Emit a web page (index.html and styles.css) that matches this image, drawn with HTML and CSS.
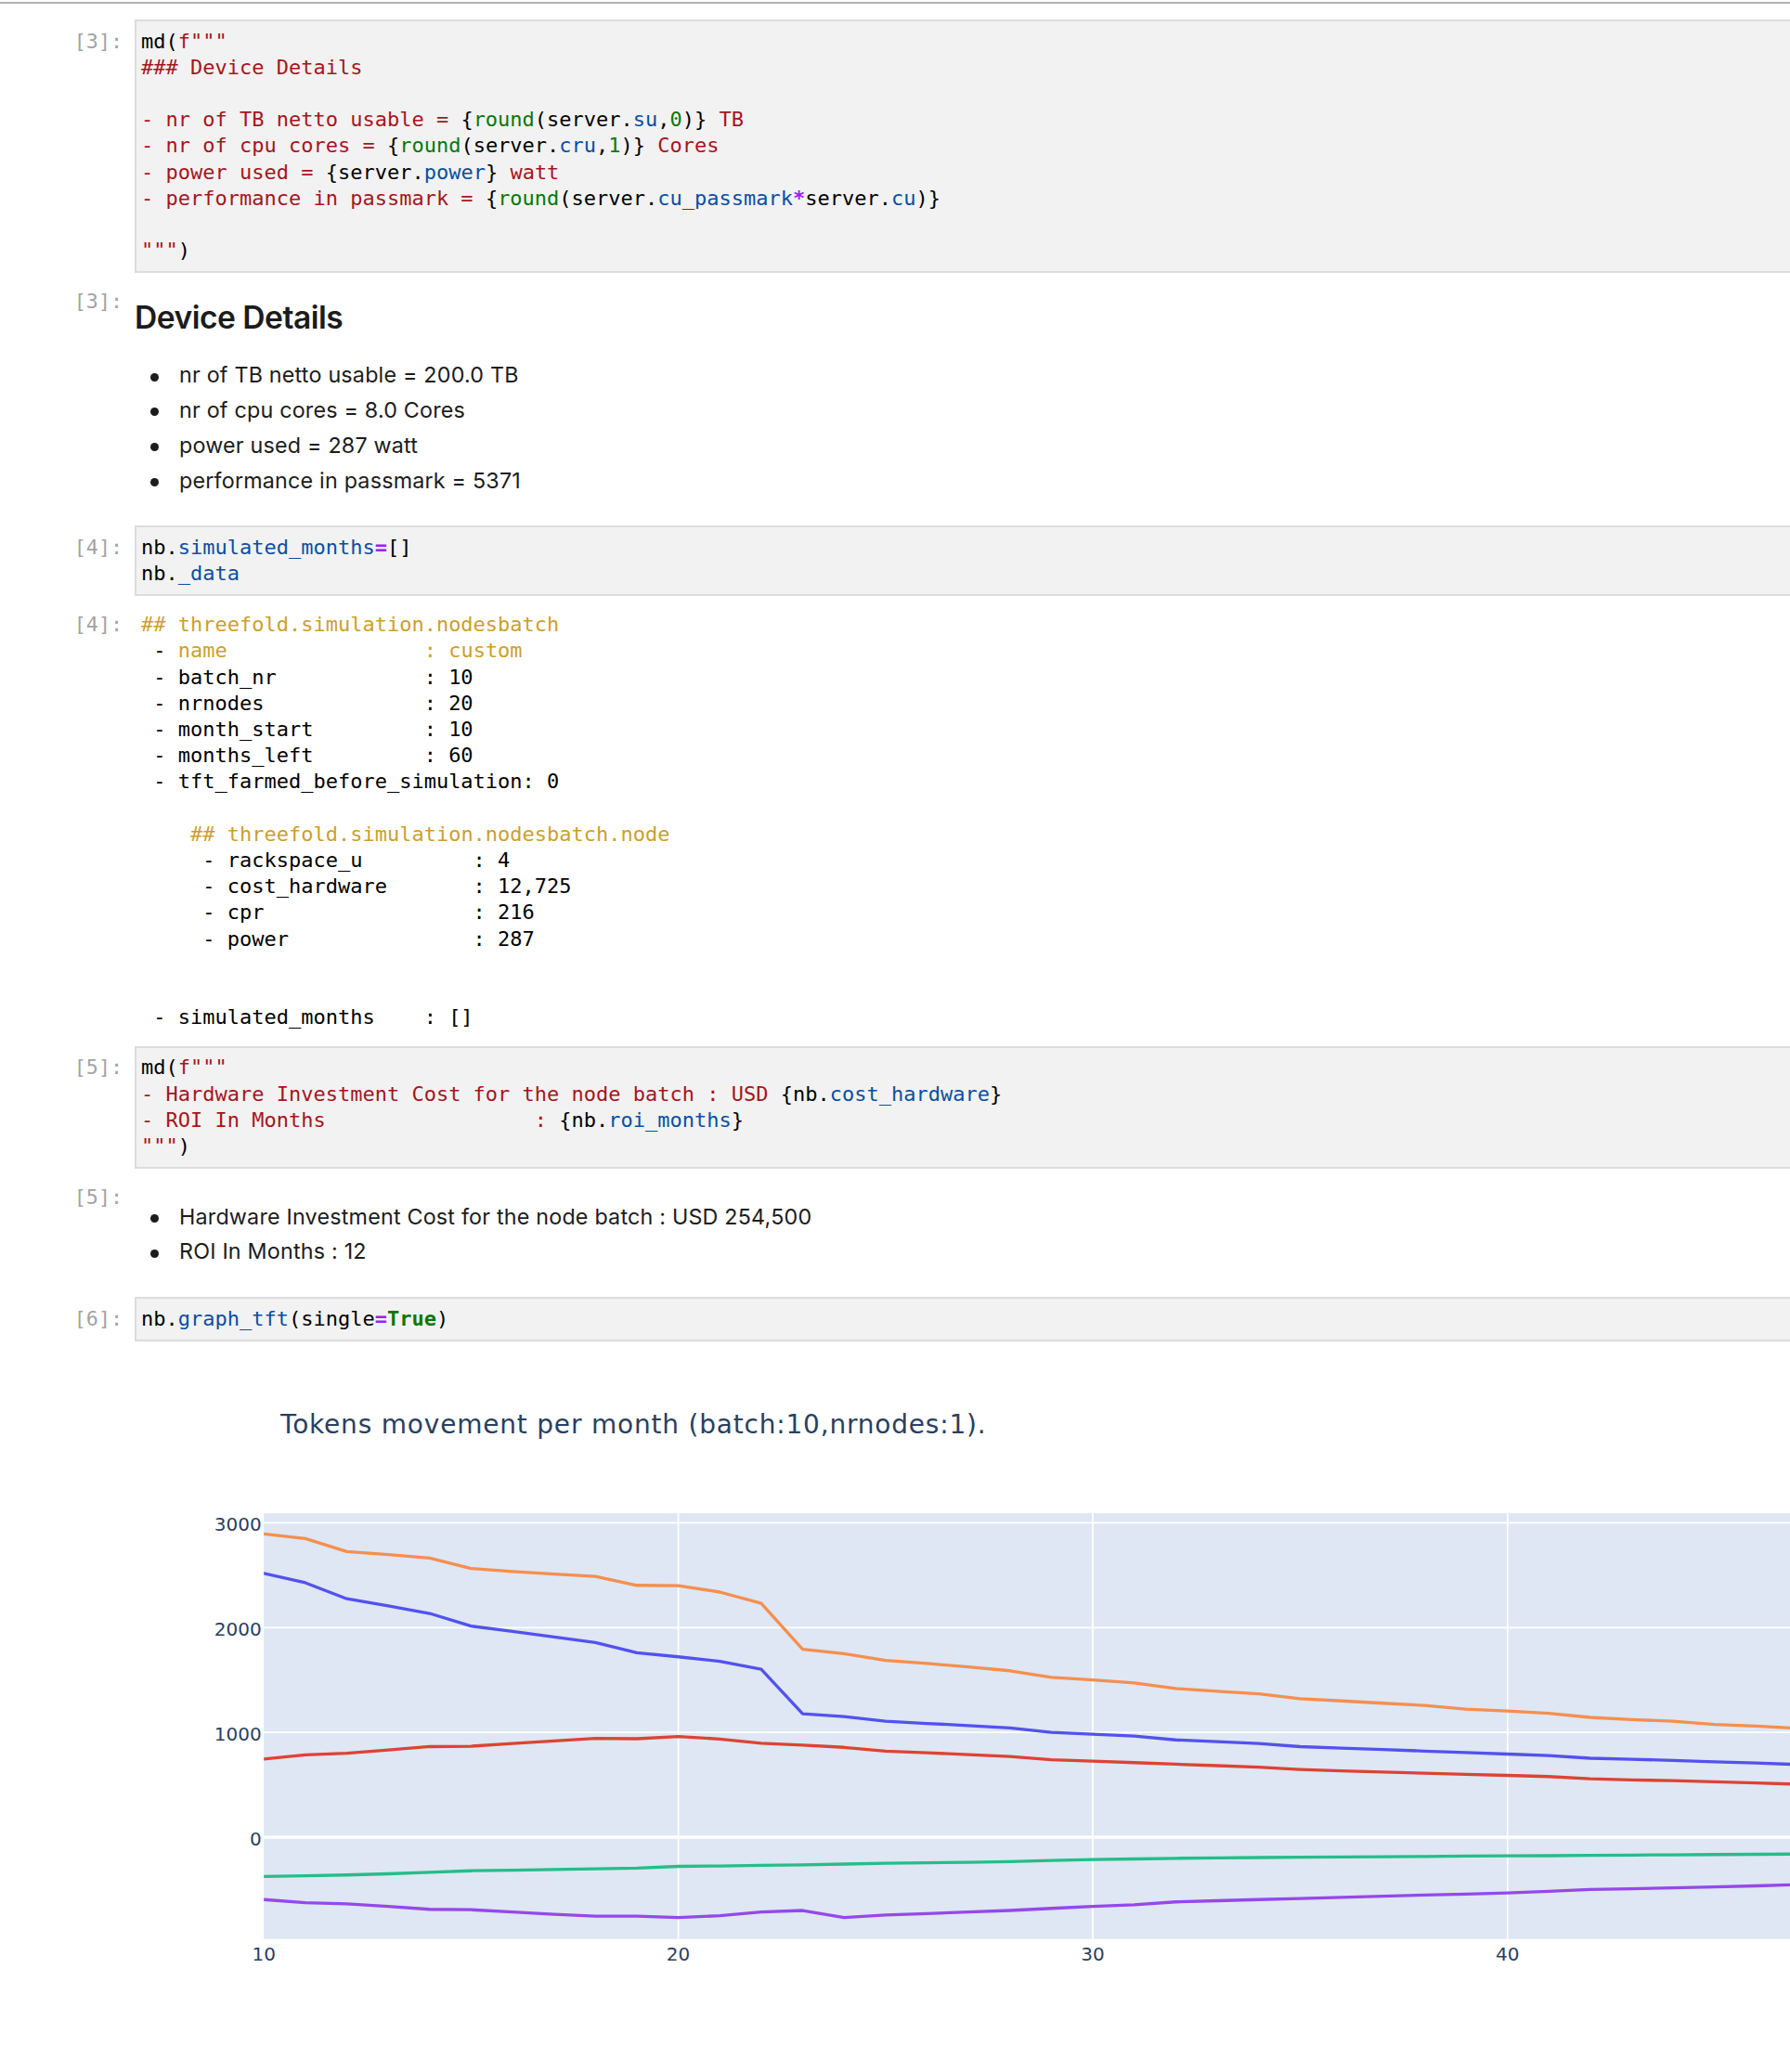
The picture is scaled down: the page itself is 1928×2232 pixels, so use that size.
FILE: index.html
```html
<!DOCTYPE html>
<html lang="en">
<head>
<meta charset="utf-8">
<title>Notebook</title>
<link rel="stylesheet" href="styles.css">
</head>
<body>
<div class="topbar"></div>
<main class="notebook">

  <section class="cell">
    <div class="row">
      <div class="prompt in">[3]:</div>
      <div class="editor"><pre class="code">md(<span class="s">f"""</span>
<span class="s">### Device Details</span>

<span class="s">- nr of TB netto usable = </span>{<span class="b">round</span>(server.<span class="p">su</span>,<span class="n">0</span>)}<span class="s"> TB</span>
<span class="s">- nr of cpu cores = </span>{<span class="b">round</span>(server.<span class="p">cru</span>,<span class="n">1</span>)}<span class="s"> Cores</span>
<span class="s">- power used = </span>{server.<span class="p">power</span>}<span class="s"> watt</span>
<span class="s">- performance in passmark = </span>{<span class="b">round</span>(server.<span class="p">cu_passmark</span><span class="o">*</span>server.<span class="p">cu</span>)}

<span class="s">"""</span>)</pre></div>
    </div>
    <div class="row out">
      <div class="prompt">[3]:</div>
      <div class="md">
        <h3>Device Details</h3>
        <ul>
          <li>nr of TB netto usable = 200.0 TB</li>
          <li>nr of cpu cores = 8.0 Cores</li>
          <li>power used = 287 watt</li>
          <li>performance in passmark = 5371</li>
        </ul>
      </div>
    </div>
  </section>

  <section class="cell">
    <div class="row">
      <div class="prompt in">[4]:</div>
      <div class="editor"><pre class="code">nb.<span class="p">simulated_months</span><span class="o">=</span>[]
nb.<span class="p">_data</span></pre></div>
    </div>
    <div class="row out">
      <div class="prompt">[4]:</div>
      <pre class="text"><span class="g">## threefold.simulation.nodesbatch</span>
 - <span class="g">name                : custom</span>
 - batch_nr            : 10
 - nrnodes             : 20
 - month_start         : 10
 - months_left         : 60
 - tft_farmed_before_simulation: 0

    <span class="g">## threefold.simulation.nodesbatch.node</span>
     - rackspace_u         : 4
     - cost_hardware       : 12,725
     - cpr                 : 216
     - power               : 287


 - simulated_months    : []</pre>
    </div>
  </section>

  <section class="cell">
    <div class="row">
      <div class="prompt in">[5]:</div>
      <div class="editor"><pre class="code">md(<span class="s">f"""</span>
<span class="s">- Hardware Investment Cost for the node batch : USD </span>{nb.<span class="p">cost_hardware</span>}
<span class="s">- ROI In Months                 : </span>{nb.<span class="p">roi_months</span>}
<span class="s">"""</span>)</pre></div>
    </div>
    <div class="row out">
      <div class="prompt">[5]:</div>
      <div class="md">
        <ul>
          <li>Hardware Investment Cost for the node batch : USD 254,500</li>
          <li>ROI In Months : 12</li>
        </ul>
      </div>
    </div>
  </section>

  <section class="cell">
    <div class="row">
      <div class="prompt in">[6]:</div>
      <div class="editor"><pre class="code">nb.<span class="p">graph_tft</span>(single<span class="o">=</span><span class="k">True</span>)</pre></div>
    </div>
    <div class="row out">
      <div class="prompt"></div>
      <div class="chart">
        <svg class="plot" width="1783" height="770" viewBox="0 0 1783 770" xmlns="http://www.w3.org/2000/svg">
          <defs>
            <clipPath id="plotclip"><rect x="139.2" y="168" width="1700" height="458.7"/></clipPath>
          </defs>
          <text class="title" x="157" y="82.3">Tokens movement per month (batch:10,nrnodes:1).</text>
          <rect class="bg" x="139.2" y="168" width="1700" height="458.7"/>
          <g class="grid">
            <line x1="585.6" y1="168" x2="585.6" y2="626.7"/>
            <line x1="1032" y1="168" x2="1032" y2="626.7"/>
            <line x1="1478.8" y1="168" x2="1478.8" y2="626.7"/>
            <line x1="139.2" y1="178.4" x2="1783" y2="178.4"/>
            <line x1="139.2" y1="291.3" x2="1783" y2="291.3"/>
            <line x1="139.2" y1="404.1" x2="1783" y2="404.1"/>
          </g>
          <line class="zero" x1="139.2" y1="517" x2="1783" y2="517"/>
          <g clip-path="url(#plotclip)">
            <g transform="translate(139.2 517) scale(44.64 -0.11287)" class="series">
              <path class="c-blue" vector-effect="non-scaling-stroke" d="M0 2518 L1 2428 L2 2275 L3 2207 L4 2135 L5 2014 L6 1964 L7 1910 L8 1857 L9 1760 L10 1721 L11 1678 L12 1603 L13 1178 L14 1150 L15 1107 L16 1085 L17 1065 L18 1043 L19 1000 L20 982 L21 964 L22 928 L23 911 L24 893 L25 864 L26 850 L27 836 L28 821 L29 807 L30 793 L31 778 L32 753 L33 743 L34 732 L35 718 L36 707 L37 693"/>
              <path class="c-red" vector-effect="non-scaling-stroke" d="M0 746 L1 786 L2 800 L3 832 L4 864 L5 868 L6 893 L7 918 L8 943 L9 939 L10 961 L11 936 L12 896 L13 878 L14 857 L15 821 L16 805 L17 788 L18 770 L19 739 L20 725 L21 711 L22 696 L23 682 L24 668 L25 646 L26 632 L27 621 L28 611 L29 600 L30 589 L31 578 L32 557 L33 546 L34 539 L35 528 L36 518 L37 505"/>
              <path class="c-green" vector-effect="non-scaling-stroke" d="M0 -375 L1 -368 L2 -361 L3 -350 L4 -336 L5 -321 L6 -315 L7 -309 L8 -302 L9 -296 L10 -279 L11 -275 L12 -270 L13 -264 L14 -257 L15 -250 L16 -245 L17 -240 L18 -234 L19 -222 L20 -214 L21 -208 L22 -202 L23 -198 L24 -195 L25 -192 L26 -190 L27 -187 L28 -185 L29 -181 L30 -179 L31 -177 L32 -174 L33 -171 L34 -169 L35 -166 L36 -164 L37 -161"/>
              <path class="c-purple" vector-effect="non-scaling-stroke" d="M0 -596 L1 -625 L2 -636 L3 -661 L4 -689 L5 -693 L6 -714 L7 -736 L8 -754 L9 -754 L10 -768 L11 -750 L12 -714 L13 -700 L14 -768 L15 -743 L16 -729 L17 -714 L18 -700 L19 -680 L20 -661 L21 -646 L22 -618 L23 -607 L24 -596 L25 -585 L26 -575 L27 -564 L28 -553 L29 -543 L30 -532 L31 -518 L32 -500 L33 -492 L34 -484 L35 -475 L36 -465 L37 -452"/>
              <path class="c-orange" vector-effect="non-scaling-stroke" d="M0 2893 L1 2850 L2 2725 L3 2696 L4 2664 L5 2564 L6 2535 L7 2510 L8 2489 L9 2403 L10 2400 L11 2339 L12 2232 L13 1793 L14 1750 L15 1686 L16 1658 L17 1624 L18 1588 L19 1525 L20 1500 L21 1471 L22 1418 L23 1393 L24 1368 L25 1321 L26 1300 L27 1278 L28 1257 L29 1221 L30 1203 L31 1182 L32 1143 L33 1121 L34 1107 L35 1075 L36 1060 L37 1038"/>
            </g>
          </g>
          <g class="ytick">
            <text x="136.7" y="187">3000</text>
            <text x="136.7" y="299.9">2000</text>
            <text x="136.7" y="412.7">1000</text>
            <text x="136.7" y="525.6">0</text>
          </g>
          <g class="xtick">
            <text x="139.2" y="649.5">10</text>
            <text x="585.6" y="649.5">20</text>
            <text x="1032" y="649.5">30</text>
            <text x="1478.8" y="649.5">40</text>
          </g>
        </svg>
      </div>
    </div>
  </section>

</main>
</body>
</html>
```
FILE: styles.css
```css
* { box-sizing: border-box; }

html, body {
  margin: 0;
  padding: 0;
  background: #ffffff;
}

body {
  width: 1928px;
  height: 2232px;
  overflow: hidden;
}

.topbar {
  height: 4px;
  border-bottom: 2px solid #b1b1b1;
}

.notebook {
  padding-top: 17px;
}

.cell + .cell {
  margin-top: 16.3px;
}

.row {
  display: flex;
  align-items: flex-start;
}

.prompt {
  flex: none;
  width: 145px;
  padding-right: 13px;
  text-align: right;
  font-family: "DejaVu Sans Mono", monospace;
  font-size: 21.7px;
  line-height: 28.2px;
  color: #a3a3a3;
  min-height: 1px;
}

.prompt.in {
  padding-top: 9.6px;
}

.editor {
  flex: 1;
  min-width: 0;
  background: #f2f2f2;
  border: 2px solid #dcdcdc;
  border-right: none;
  padding: 7.6px 5px;
}

.code,
.text {
  margin: 0;
  font-family: "DejaVu Sans Mono", monospace;
  font-size: 22px;
  line-height: 28.2px;
  color: #000000;
  white-space: pre;
}

.text {
  padding-left: 7px;
}

.code .s { color: #a8141c; }
.code .b { color: #08780a; }
.code .n { color: #08780a; }
.code .p { color: #0b4ea2; }
.code .o { color: #a020f0; font-weight: bold; }
.code .k { color: #08780a; font-weight: bold; }

.text .g { color: #cc9f2c; }

.out {
  margin-top: 17.3px;
}

.md {
  flex: 1;
  font-family: Inter, "Noto Sans", sans-serif;
  font-size: 23.3px;
  letter-spacing: 0.2px;
  color: #1c1c1c;
}

.md h3 {
  margin: 13.7px 0 0;
  font-size: 33.6px;
  line-height: 33.6px;
  font-weight: 600;
  letter-spacing: -0.5px;
}

.md ul {
  margin: 26.7px 0 13.6px;
  padding: 0;
  list-style: none;
  line-height: 37.8px;
}

.md ul:first-child {
  margin-top: 15.6px;
}

.md li {
  display: flex;
  align-items: center;
}

.md li::before {
  content: "";
  flex: none;
  width: 9px;
  height: 9px;
  border-radius: 50%;
  background: #1c1c1c;
  margin: 4px 22px 0 17px;
}

.chart {
  flex: none;
  width: 1783px;
}

.plot {
  display: block;
  overflow: hidden;
  font-family: "DejaVu Sans", Verdana, sans-serif;
}

.plot .title {
  font-size: 28px;
  letter-spacing: 0.8px;
  fill: #2a3f5f;
}

.plot .bg {
  fill: #dee7f3;
}

.plot .grid line {
  stroke: #ffffff;
  stroke-width: 1.7;
}

.plot .zero {
  stroke: #ffffff;
  stroke-width: 3.3;
}

.plot .series path {
  fill: none;
  stroke-width: 3.3;
  stroke-linejoin: round;
  stroke-linecap: round;
}

.plot .c-blue { stroke: #5252ee; }
.plot .c-red { stroke: #dd4334; }
.plot .c-green { stroke: #26bd88; }
.plot .c-purple { stroke: #9548eb; }
.plot .c-orange { stroke: #f58f4f; }

.plot .ytick text {
  font-size: 20px;
  fill: #2a3f5f;
  text-anchor: end;
}

.plot .xtick text {
  font-size: 20px;
  fill: #2a3f5f;
  text-anchor: middle;
}
```
